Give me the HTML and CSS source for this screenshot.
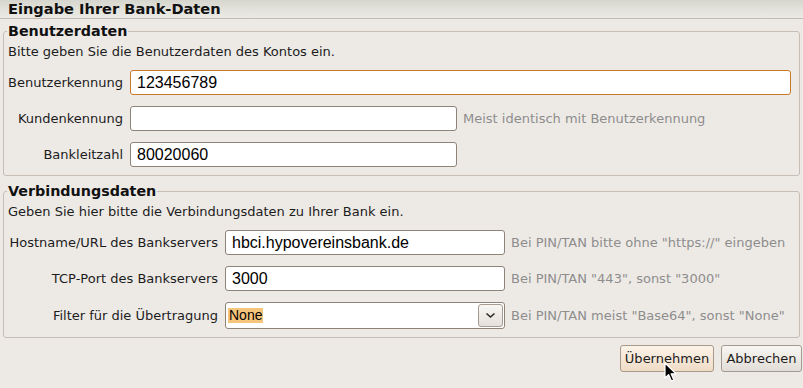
FILE: index.html
```html
<!DOCTYPE html>
<html lang="de">
<head>
<meta charset="utf-8">
<title>Eingabe Ihrer Bank-Daten</title>
<link rel="stylesheet" href="styles.css">
</head>
<body>
<div class="window">
  <div class="titlebar">Eingabe Ihrer Bank-Daten</div>

  <fieldset class="group">
    <legend>Benutzerdaten</legend>
    <p class="desc">Bitte geben Sie die Benutzerdaten des Kontos ein.</p>
    <div class="form form-user">
      <label class="lbl">Benutzerkennung</label>
      <div class="entry focus wide">123456789</div>
      <label class="lbl">Kundenkennung</label>
      <div class="entry"></div>
      <span class="hint">Meist identisch mit Benutzerkennung</span>
      <label class="lbl">Bankleitzahl</label>
      <div class="entry">80020060</div>
    </div>
  </fieldset>

  <fieldset class="group group-conn">
    <legend>Verbindungsdaten</legend>
    <p class="desc">Geben Sie hier bitte die Verbindungsdaten zu Ihrer Bank ein.</p>
    <div class="form form-conn">
      <label class="lbl">Hostname/URL des Bankservers</label>
      <div class="entry">hbci.hypovereinsbank.de</div>
      <span class="hint">Bei PIN/TAN bitte ohne "https://" eingeben</span>
      <label class="lbl">TCP-Port des Bankservers</label>
      <div class="entry">3000</div>
      <span class="hint">Bei PIN/TAN "443", sonst "3000"</span>
      <label class="lbl">Filter für die Übertragung</label>
      <div class="combo">
        <span class="combo-text"><span class="sel">None</span></span>
        <span class="combo-btn">
          <svg width="11" height="7" viewBox="0 0 11 7"><polyline points="1.5,1.5 5.5,5 9.5,1.5" fill="none" stroke="#2a2a2a" stroke-width="1.6"/></svg>
        </span>
      </div>
      <span class="hint">Bei PIN/TAN meist "Base64", sonst "None"</span>
    </div>
  </fieldset>

  <div class="buttons">
    <button class="btn btn-ok hover">Übernehmen</button>
    <button class="btn btn-cancel">Abbrechen</button>
  </div>

  <svg class="cursor" width="14" height="21" viewBox="0 0 14 21">
    <path d="M1 1 L1 16 L4.6 12.6 L7.4 19 L9.8 18 L7.1 11.8 L12 11.8 Z" fill="#000" stroke="#fff" stroke-width="1.2" stroke-linejoin="round"/>
  </svg>
</div>
</body>
</html>
```

FILE: styles.css
```css
html, body {
  margin: 0;
  padding: 0;
  background: #edeae6;
}

.window {
  position: relative;
  width: 803px;
  height: 388px;
  font-family: "DejaVu Sans", sans-serif;
  font-size: 13px;
  color: #1c1c1c;
  background: #edeae6;
}

.titlebar {
  height: 18px;
  line-height: 18px;
  padding-left: 8px;
  font-weight: bold;
  font-size: 14.6px;
  color: #111;
  background: linear-gradient(#d6d6ce, #e4e3dc 60%, #ebe9e3);
  border-bottom: 1px solid #c3bbb1;
}

.group {
  margin: 5px 3px 0 3px;
  padding: 0 8px 8px 4px;
  border: 1px solid #c6beb4;
  border-radius: 3px;
  min-width: 0;
}

.group-conn {
  margin-top: 8px;
}

.group legend {
  padding: 0 1px;
  margin-left: -1px;
  font-weight: bold;
  font-size: 14.3px;
  line-height: 14px;
  color: #111;
}

.desc {
  margin: 6px 0 11px 0;
  line-height: 15px;
}

.form {
  display: grid;
  column-gap: 7px;
  row-gap: 11px;
  align-items: center;
}

.form-user {
  grid-template-columns: 115px 327px 1fr;
}

.form-conn {
  grid-template-columns: 210px 280px 1fr;
}

.lbl {
  justify-self: end;
  white-space: nowrap;
}

.hint {
  color: #8d8d8d;
  white-space: nowrap;
  margin-left: -1px;
}

.entry {
  box-sizing: border-box;
  height: 25px;
  border: 1px solid #8e8378;
  border-radius: 3px;
  background: #fff;
  padding: 0 6px;
  font-family: "Liberation Sans", Arial, sans-serif;
  font-size: 16px;
  line-height: 23px;
  color: #000;
}

.entry.wide {
  grid-column: 2 / 4;
}

.entry.focus {
  border-color: #c97a2b;
}

.combo {
  box-sizing: border-box;
  height: 27px;
  display: flex;
  align-items: center;
  border: 1px solid #8e8378;
  border-radius: 3px;
  background: #fff;
  padding: 1px;
}

.combo-text {
  flex: 1;
  padding-left: 1px;
  font-family: "Liberation Sans", Arial, sans-serif;
  font-size: 14px;
  line-height: 15px;
  color: #000;
}

.sel {
  display: inline-block;
  background: #f6c57c;
  padding: 0 1px;
  line-height: 15px;
}

.combo-btn {
  box-sizing: border-box;
  width: 25px;
  height: 23px;
  display: flex;
  align-items: center;
  justify-content: center;
  border: 1px solid #a69c91;
  border-radius: 3px;
  background: linear-gradient(#f8f6f3, #e4dfd9);
}

.buttons {
  display: flex;
  justify-content: flex-end;
  gap: 7px;
  margin-top: 7px;
  padding-right: 1px;
}

.btn {
  box-sizing: border-box;
  height: 27px;
  padding: 0;
  border: 1px solid #a59a8f;
  border-radius: 3px;
  background: linear-gradient(#f8f6f3, #e2ddd7);
  font-family: "DejaVu Sans", sans-serif;
  font-size: 13px;
  color: #1c1c1c;
}

.btn-ok {
  width: 94px;
}

.btn-cancel {
  width: 81px;
}

.btn.hover {
  background: linear-gradient(#fcf3e8, #efdcc6);
  border-color: #a8998a;
}

.cursor {
  position: absolute;
  left: 664px;
  top: 362px;
}
```
